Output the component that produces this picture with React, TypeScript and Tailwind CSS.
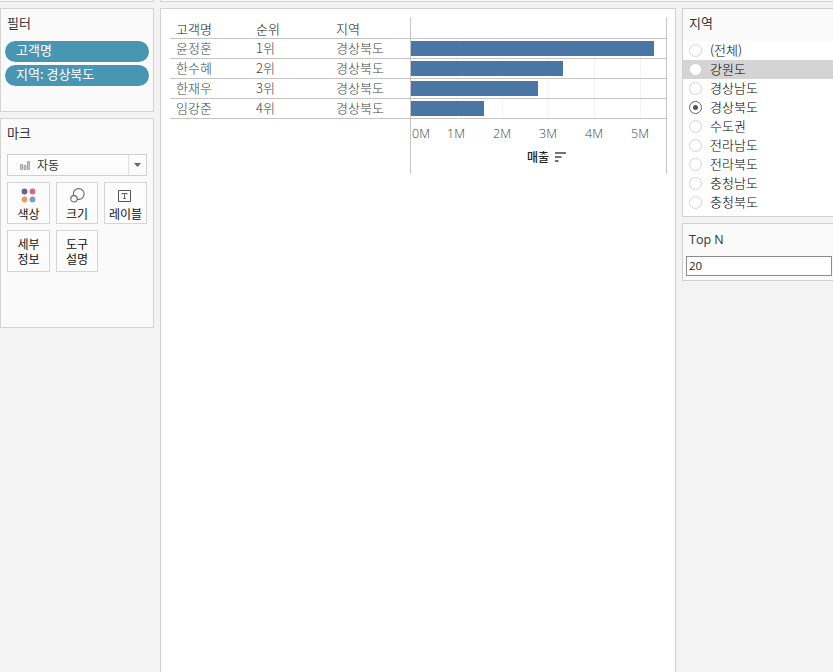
import type { ReactNode } from 'react';

const customers = [
  { name: '윤정훈', rank: '1위', region: '경상북도', width: 243 },
  { name: '한수혜', rank: '2위', region: '경상북도', width: 152 },
  { name: '한재우', rank: '3위', region: '경상북도', width: 127 },
  { name: '임강준', rank: '4위', region: '경상북도', width: 73 },
];
const regions = ['(전체)', '강원도', '경상남도', '경상북도', '수도권', '전라남도', '전라북도', '충청남도', '충청북도'];
const ticks = ['0M', '1M', '2M', '3M', '4M', '5M'];

function Pill({ children }: { children: ReactNode }) {
  return (
    <div className="h-[21px] rounded-full bg-[#4996b2] pl-[11px] text-[13px] leading-[17px] text-white">{children}</div>
  );
}

function MarkButton({ icon, children }: { icon?: ReactNode; children: ReactNode }) {
  return (
    <button className="flex h-[42px] flex-col items-center justify-start border border-[#d4d4d4] bg-[#fcfcfc] pt-[5px] text-[12px] leading-[15px] text-[#111]">
      {icon && <span className="-mt-px mb-0.5 flex h-[17px] items-center">{icon}</span>}
      <span>{children}</span>
    </button>
  );
}

function FilterPanels() {
  return (
    <aside className="flex w-[154px] shrink-0 flex-col gap-1.5">
      <section className="h-[104px] border border-[#d4d4d4] bg-[#fafafa] pl-1 pr-1">
        <h2 className="pl-[2px] pt-1 text-[13px] leading-[20px]">필터</h2>
        <div className="mt-2 flex flex-col gap-[3px]">
          <Pill>고객명</Pill>
          <Pill>지역: 경상북도</Pill>
        </div>
      </section>
      <section className="h-[210px] border border-[#d4d4d4] bg-[#fafafa] px-1.5">
        <h2 className="pt-1 text-[13px] leading-[20px]">마크</h2>
        <div className="mt-[11px] flex h-[22px] items-center border border-[#cfcfcf] bg-[#fcfcfc] text-[12px]">
          <svg className="ml-3 mr-[7px]" width="10" height="9" viewBox="0 0 10 9" fill="#c8c8c8" stroke="#999" strokeWidth=".8">
            <path d="M.5 3.500h2v5h-2zM4 4.500h2v4H4zM7.500.5h2v8h-2z" />
          </svg>
          <span className="flex-1">자동</span>
          <span className="flex h-full w-[18px] items-center justify-center border-l border-[#e0e0e0]">
            <svg width="7" height="4" viewBox="0 0 7 4" fill="#666"><path d="M0 0h7L3.500 4z" /></svg>
          </span>
        </div>
        <div className="mt-1.5 grid grid-cols-[43px_42px_43px] gap-1.5">
          <MarkButton
            icon={
              <svg width="15" height="15" viewBox="0 0 15 15">
                <circle cx="3.500" cy="3.500" r="2.900" fill="#66628b" />
                <circle cx="11.500" cy="3.500" r="2.900" fill="#e0647f" />
                <circle cx="3.500" cy="11.500" r="2.900" fill="#f2995f" />
                <circle cx="11.500" cy="11.500" r="2.900" fill="#7b9bd0" />
              </svg>
            }
          >
            색상
          </MarkButton>
          <MarkButton
            icon={
              <svg width="15" height="15" viewBox="0 0 15 15" stroke="#666" strokeWidth="1.100">
                <circle cx="8.700" cy="6" r="5.400" fill="none" />
                <circle cx="4" cy="10.800" r="3.200" fill="#fcfcfc" />
              </svg>
            }
          >
            크기
          </MarkButton>
          <MarkButton
            icon={
              <svg className="-translate-x-px" width="13" height="12" viewBox="0 0 13 12" fill="none" stroke="#555">
                <path d="M.5.5h12v11H.5z" />
                <path d="M4 4.500v-1h5v1M6.500 3.500v5M5.200 8.500h2.600" strokeWidth=".9" />
              </svg>
            }
          >
            레이블
          </MarkButton>
          <MarkButton>세부<br />정보</MarkButton>
          <MarkButton>도구<br />설명</MarkButton>
        </div>
      </section>
    </aside>
  );
}

function Worksheet() {
  return (
    <main className="w-[516px] shrink-0 border border-b-0 border-[#d0d0d0] bg-white pl-[9px] pt-2 text-[13px]">
      <div className="flex w-[497px]">
        <div className="w-[240px]">
          <div className="grid h-[22px] grid-cols-[80px_80px_74px] items-end border-b border-[#c4c4c4] pl-1.5 font-light leading-[18px] text-[#111]">
            <span>고객명</span><span>순위</span><span>지역</span>
          </div>
          {customers.map((c) => (
            <div key={c.name} className="grid h-5 grid-cols-[80px_80px_74px] border-b border-[#c4c4c4] pl-1.5 font-light leading-[18px] text-[#444]">
              <span>{c.name}</span><span>{c.rank}</span><span>{c.region}</span>
            </div>
          ))}
        </div>
        <div className="h-[157px] w-[257px] border-x border-[#c4c4c4]">
          <div className="h-[22px] border-b border-[#c4c4c4]" />
          {customers.map((c) => (
            <div key={c.name} className="grid h-5 border-b border-[#c4c4c4]">
              <div className="col-start-1 row-start-1 flex">
                {[1, 2, 3, 4, 5].map((n) => (
                  <i key={n} className="w-[46px] border-r border-[#f3f3f3]" />
                ))}
              </div>
              <div className="z-10 col-start-1 row-start-1 mt-[2px] h-[15px] bg-[#4a76a6]" style={{ width: c.width }} />
            </div>
          ))}
          <div className="flex pt-1 font-[Open_Sans] text-[12.5px] font-light leading-[21px] text-[#444]">
            <span className="w-[22px] pl-px">{ticks[0]}</span>
            {ticks.slice(1).map((t) => (
              <span key={t} className="w-[46px] text-center">{t}</span>
            ))}
          </div>
          <div className="flex items-center justify-center gap-[6px] pl-4 pt-[3px] text-[12px] font-medium leading-[20px] text-[#222]">
            매출
            <svg width="11" height="10" viewBox="0 0 11 10" fill="none" stroke="#444" strokeWidth="1.500">
              <path d="M0 1h11M0 5h6.500M0 9h3.500" />
            </svg>
          </div>
        </div>
      </div>
    </main>
  );
}

function Parameters() {
  return (
    <aside className="flex flex-1 flex-col gap-1.5">
      <section className="h-[209px] border border-r-0 border-[#d0d0d0] bg-white">
        <h2 className="h-[32px] bg-[#fafafa] pl-1.5 pt-1 text-[13px] leading-[20px]">지역</h2>
        {regions.map((r, i) => (
          <label key={r} className={`flex h-[19px] items-center gap-2 pl-1.5 text-[13px] font-light leading-[17px] text-black ${i === 1 ? 'bg-[#d4d4d4]' : ''}`}>
            <span className={`flex size-[13px] items-center justify-center rounded-full border bg-white ${r === '경상북도' ? 'border-[#666]' : 'border-[#d4d4d4]'}`}>
              {r === '경상북도' && <i className="size-[5px] rounded-full bg-[#555]" />}
            </span>
            <span className="h-[19px]">{r}</span>
          </label>
        ))}
      </section>
      <section className="h-[58px] border border-r-0 border-[#d0d0d0] bg-[#fafafa]">
        <h2 className="h-8 pl-1.5 pt-[6px] font-[Open_Sans] text-[12.5px] leading-[20px]">Top N</h2>
        <div className="ml-[3px] mr-px h-5 border border-[#8c8c8c] bg-white pl-[2px] font-[Open_Sans] text-[11.5px] leading-[18px] text-[#222]">20</div>
      </section>
    </aside>
  );
}

export default function App() {
  return (
    <div className="flex h-[672px] w-[833px] flex-col overflow-hidden whitespace-nowrap bg-[#f3f3f3] font-['Noto_Sans_CJK_KR',sans-serif] text-[#333]">
      <div className="flex h-2 shrink-0 gap-1.5">
        <div className="h-[2px] w-[154px] border-b border-r border-[#d0d0d0] bg-[#fafafa]" />
        <div className="h-[2px] flex-1 border-b border-l border-[#d0d0d0] bg-[#fafafa]" />
      </div>
      <div className="flex flex-1 gap-1.5">
        <FilterPanels />
        <Worksheet />
        <Parameters />
      </div>
    </div>
  );
}
